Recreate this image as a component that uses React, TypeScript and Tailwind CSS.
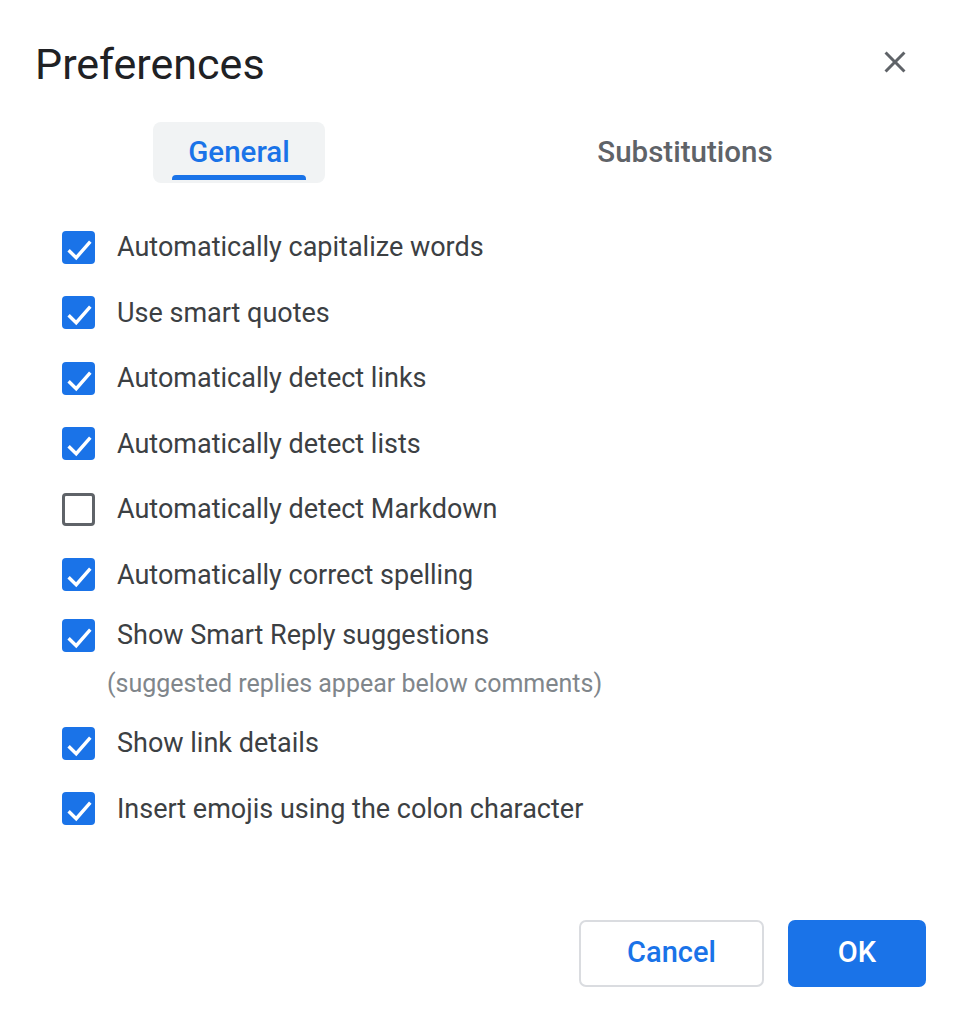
import React from "react";

const items: { label: string; checked: boolean; hint?: string }[] = [
  { label: "Automatically capitalize words", checked: true },
  { label: "Use smart quotes", checked: true },
  { label: "Automatically detect links", checked: true },
  { label: "Automatically detect lists", checked: true },
  { label: "Automatically detect Markdown", checked: false },
  { label: "Automatically correct spelling", checked: true },
  {
    label: "Show Smart Reply suggestions",
    checked: true,
    hint: "(suggested replies appear below comments)"
  },
  { label: "Show link details", checked: true },
  { label: "Insert emojis using the colon character", checked: true }
];

const Checkbox = ({ checked }: { checked: boolean }) =>
  checked ? (
    <div className="h-[33px] w-[33px] shrink-0 rounded-[4px] bg-[#1a73e8]">
      <svg width="33" height="33" viewBox="0 0 33 33">
        <path
          d="M6.6 19.3l7.6 7.4L28.3 10.7"
          fill="none"
          stroke="white"
          strokeWidth="3.4"
        />
      </svg>
    </div>
  ) : (
    <div className="h-[33px] w-[33px] shrink-0 rounded-[4px] border-[3px] border-[#5f6368] bg-white" />
  );

export default function App() {
  return (
    <div
      className="h-[1024px] w-[972px] bg-white"
      style={{ fontFamily: "Roboto, 'Liberation Sans', sans-serif" }}
    >
      <div className="flex items-center justify-between pl-[35px] pr-[59px] pt-[38px]">
        <h1 className="text-[43px] leading-[52px] text-[#202124]">
          Preferences
        </h1>
        <svg
          className="mb-[4px]"
          width="36"
          height="36"
          viewBox="0 0 24 24"
          fill="#5f6368"
        >
          <path d="M19 6.41L17.59 5 12 10.59 6.41 5 5 6.41 10.59 12 5 17.59 6.41 19 12 13.41 17.59 19 19 17.59 13.41 12z" />
        </svg>
      </div>

      <div className="mt-[32px] flex">
        <div className="relative ml-[153px] flex h-[61px] w-[172px] items-center justify-center rounded-[8px] bg-[#f1f3f4]">
          <span className="text-[29.5px] font-medium text-[#1a73e8]">
            General
          </span>
          <div className="absolute bottom-[3px] left-[19px] right-[19px] h-[5px] rounded-t-[4px] bg-[#1a73e8]" />
        </div>
        <div className="ml-[260px] flex h-[61px] w-[200px] items-center justify-center">
          <span className="text-[29.5px] font-medium text-[#5f6368]">
            Substitutions
          </span>
        </div>
      </div>

      <div className="mt-[31.5px] pl-[62px]">
        {items.map((item) =>
          item.hint ? (
            <div key={item.label} className="h-[103px]">
              <div className="flex h-[55px] items-center gap-[22px]">
                <Checkbox checked={item.checked} />
                <span className="text-[27px] text-[#3c4043]">
                  {item.label}
                </span>
              </div>
              <p className="ml-[45px] mt-[6.5px] text-[25px] leading-[30px] text-[#80868b]">
                {item.hint}
              </p>
            </div>
          ) : (
            <div
              key={item.label}
              className="flex h-[65.5px] items-center gap-[22px]"
            >
              <Checkbox checked={item.checked} />
              <span className="text-[27px] text-[#3c4043]">{item.label}</span>
            </div>
          )
        )}
      </div>

      <div className="mt-[78px] flex justify-end gap-[24px] pr-[46px]">
        <button
          type="button"
          className="h-[67px] w-[185px] rounded-[7px] border-2 border-[#dadce0] bg-white text-[29px] font-medium text-[#1a73e8]"
        >
          Cancel
        </button>
        <button
          type="button"
          className="h-[67px] w-[138px] rounded-[7px] bg-[#1a73e8] text-[29px] font-medium text-white"
        >
          OK
        </button>
      </div>
    </div>
  );
}
